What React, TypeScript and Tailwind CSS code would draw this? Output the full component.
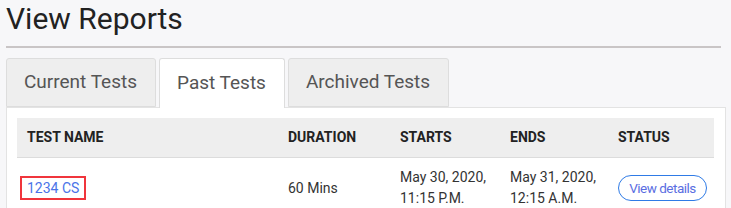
import React from "react";

export default function App() {
  const tabs = [
    { label: "Current Tests", active: false },
    { label: "Past Tests", active: true },
    { label: "Archived Tests", active: false },
  ];
  const th = "h-[40px] bg-[#eeeeee] border-b border-[#dcdcdc] pl-[10px] flex items-center text-[14px] font-bold text-[#222]";
  return (
    <div className="w-[731px] h-[208px] overflow-hidden bg-[#f7f7f9] font-['Roboto',sans-serif] text-[#222]">
      <div className="pl-[6px] pr-[5px]">
        <h1 className="text-[30px] leading-[36px] pt-[1px] font-normal text-[#222]">View Reports</h1>
        <div className="mt-[9px] h-[2px] bg-[#c9c5c6] mr-[5px]" />
        <div className="mt-[10px] flex gap-[3px]">
          {tabs.map((t) => (
            <div
              key={t.label}
              className={
                t.active
                  ? "h-[50px] -mb-[1px] pl-[17px] pr-[18px] flex items-center text-[19px] text-[#555] bg-white border border-b-0 border-[#dddddd] rounded-t-[3px] relative z-10"
                  : "h-[49px] pl-[17px] pr-[18px] flex items-center text-[19px] text-[#555] bg-[#eeeeee] border border-[#dddddd] rounded-t-[3px]"
              }
            >
              {t.label}
            </div>
          ))}
        </div>
        <div className="bg-white border border-[#e3e3e3] px-[10px] pt-[10px] pb-[20px]">
          <div className="grid grid-cols-[261px_112px_110px_108px_106px]">
            <div className={th}>TEST NAME</div>
            <div className={th}>DURATION</div>
            <div className={th}>STARTS</div>
            <div className={th}>ENDS</div>
            <div className={th}>STATUS</div>

            <div className="h-[60px] pl-[3px] flex items-center text-[14px]">
              <span className="border-2 border-[#f0353c] px-[5px] h-[24px] flex items-center text-[#4a73e8]">1234 CS</span>
            </div>
            <div className="h-[60px] pl-[10px] flex items-center text-[14px] text-[#333]">60 Mins</div>
            <div className="h-[60px] pl-[10px] flex items-center text-[14px] leading-[21px] text-[#333]">
              <div>May 30, 2020,<br />11:15 P.M.</div>
            </div>
            <div className="h-[60px] pl-[10px] flex items-center text-[14px] leading-[21px] text-[#333]">
              <div>May 31, 2020,<br />12:15 A.M.</div>
            </div>
            <div className="h-[60px] pl-[10px] flex items-center">
              <span className="h-[26px] w-[89px] rounded-full border border-[#2f7be6] flex items-center justify-center text-[13.5px] tracking-[-0.5px] text-[#5a6ee2]">View details</span>
            </div>
          </div>
        </div>
      </div>
    </div>
  );
}
